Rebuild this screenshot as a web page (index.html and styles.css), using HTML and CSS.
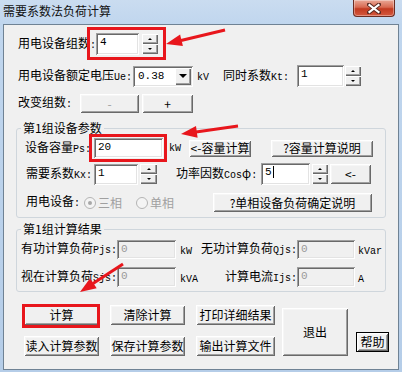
FILE: index.html
```html
<!DOCTYPE html>
<html lang="zh">
<head>
<meta charset="utf-8">
<title>需要系数法负荷计算</title>
<link rel="stylesheet" href="styles.css">
</head>
<body>
<div class="window">
  <div class="titlebar">
    <span class="title">需要系数法负荷计算</span>
    <div class="close">
      <svg width="14" height="11" viewBox="0 0 14 11">
        <path d="M2 1.5 L12 9.5 M12 1.5 L2 9.5" stroke="#5a2a22" stroke-width="4" stroke-linecap="square"/>
        <path d="M2.5 2 L11.5 9 M11.5 2 L2.5 9" stroke="#fff" stroke-width="2.2" stroke-linecap="square"/>
      </svg>
    </div>
  </div>

  <div class="client">
    <div class="row row-1">
      <div class="lbl w-count">用电设备组数<span class="m">:</span></div>
      <div class="edit e-count">4</div>
      <div class="spin sp-count"><span class="up"></span><span class="dn"></span></div>
    </div>

    <div class="row row-2">
      <div class="lbl w-volt">用电设备额定电压<span class="m">Ue:</span></div>
      <div class="combo">
        <div class="combo-val">0.38</div>
        <div class="combo-dd"><span class="tri"></span></div>
      </div>
      <div class="unit u-kv m">kV</div>
      <div class="lbl w-kt">同时系数<span class="m">Kt:</span></div>
      <div class="edit e-kt">1</div>
      <div class="spin sp-kt"><span class="up"></span><span class="dn"></span></div>
    </div>

    <div class="row row-3">
      <div class="lbl w-chg">改变组数<span class="m">:</span></div>
      <div class="btn b-minus dim">-</div>
      <div class="btn b-plus">+</div>
    </div>

    <fieldset class="group g-1">
      <legend>第1组设备参数</legend>
      <div class="row row-a">
        <div class="lbl w-ps">设备容量<span class="m">Ps:</span></div>
        <div class="edit e-ps">20</div>
        <div class="unit u-kw m">kW</div>
        <div class="btn b-cap">&lt;-容量计算</div>
        <div class="btn b-capdoc">?容量计算说明</div>
      </div>
      <div class="row row-b">
        <div class="lbl w-kx">需要系数<span class="m">Kx:</span></div>
        <div class="edit e-kx">1</div>
        <div class="spin sp-kx"><span class="up"></span><span class="dn"></span></div>
        <div class="lbl w-cos">功率因数<span class="m">Cos</span>φ<span class="m">:</span></div>
        <div class="edit e-cos">5<span class="caret"></span></div>
        <div class="spin sp-cos"><span class="up"></span><span class="dn"></span></div>
        <div class="btn b-back">&lt;-</div>
      </div>
      <div class="row row-c">
        <div class="lbl w-dev">用电设备<span class="m">:</span></div>
        <span class="radio on"></span><span class="rlbl">三相</span>
        <span class="radio r2"></span><span class="rlbl">单相</span>
        <div class="btn b-single">?单相设备负荷确定说明</div>
      </div>
    </fieldset>

    <fieldset class="group g-2">
      <legend>第1组计算结果</legend>
      <div class="row row-r1">
        <div class="lbl w-res">有功计算负荷<span class="m">Pjs:</span></div>
        <div class="edit dis e-res">0</div>
        <div class="unit u-res m">kW</div>
        <div class="lbl w-res2">无功计算负荷<span class="m">Qjs:</span></div>
        <div class="edit dis e-res2">0</div>
        <div class="unit u-res3 m">kVar</div>
      </div>
      <div class="row row-r2">
        <div class="lbl w-res">视在计算负荷<span class="m">Sjs:</span></div>
        <div class="edit dis e-res">0</div>
        <div class="unit u-res m">kVA</div>
        <div class="lbl w-res2">计算电流<span class="m">Ijs:</span></div>
        <div class="edit dis e-res2">0</div>
        <div class="unit u-res3 m">A</div>
      </div>
    </fieldset>

    <div class="actions">
      <div class="btn-grid">
        <div class="btn">计算</div>
        <div class="btn">清除计算</div>
        <div class="btn">打印详细结果</div>
        <div class="btn">读入计算参数</div>
        <div class="btn">保存计算参数</div>
        <div class="btn">输出计算文件</div>
      </div>
      <div class="btn b-exit">退出</div>
      <div class="btn def b-help">帮助</div>
    </div>
  </div>

  <svg class="marks" width="402" height="372" viewBox="0 0 402 372">
    <g fill="none" stroke="#e8161c" stroke-width="3">
      <rect x="88.5" y="28.5" width="76" height="30"/>
      <rect x="90.5" y="135.5" width="75" height="25"/>
      <rect x="23.5" y="305.5" width="75" height="21"/>
      <line x1="225" y1="30" x2="181" y2="40.5"/>
      <line x1="238" y1="126" x2="196" y2="132"/>
      <line x1="123" y1="264" x2="93" y2="283.5"/>
    </g>
    <g fill="#e8161c">
      <polygon points="166,44 180.1,34.5 182.9,46.1"/>
      <polygon points="181,134 196,125.9 197.6,137.7"/>
      <polygon points="80,292 90.1,278.3 96.7,288.3"/>
    </g>
  </svg>
</div>
</body>
</html>
```

FILE: styles.css
```css
* { box-sizing: border-box; }
html, body { margin: 0; padding: 0; }
body {
  width: 402px; height: 372px; overflow: hidden;
  background: #bcd3eb;
  font-family: "Noto Sans CJK SC", sans-serif;
  font-size: 12px; color: #000;
}
.window {
  position: relative; width: 402px; height: 372px;
  background: linear-gradient(to bottom, #cadcf0 0, #c0d6ee 24px, #b5cde8 100%);
}
.titlebar {
  height: 24px; display: flex; justify-content: space-between; align-items: flex-start;
}
.title { margin: 3px 0 0 3px; line-height: 15px; font-size: 12px; color: #111; }
.close {
  width: 42px; height: 17px; margin-right: 7px;
  border: 1px solid #6b2c22; border-top: none; border-radius: 0 0 4px 4px;
  background: linear-gradient(#eaa896, #d86a52 45%, #c23a20 55%, #d4583e);
  display: flex; align-items: center; justify-content: center;
  box-shadow: inset 0 0 0 1px rgba(255,255,255,0.35);
}
.client {
  margin-left: 3px; width: 396px; height: 346px;
  border: 1px solid #6f8294; background: #f0f0f0;
  display: flex; flex-direction: column;
}
.m { font-family: "Liberation Mono", monospace; font-size: 10px; }
.row { display: flex; align-items: center; flex: none; }
.lbl { flex: none; white-space: nowrap; line-height: 14px; }
.unit { flex: none; white-space: nowrap; }

/* edits */
.edit {
  flex: none; background: #fff;
  box-shadow: inset 1px 1px 0 #a0a0a0, inset -1px -1px 0 #fff, inset 2px 2px 0 #696969, inset -2px -2px 0 #e3e3e3;
  padding: 3px 0 0 4px;
  font-family: "Liberation Mono", monospace; font-size: 11px; line-height: 12px;
  display: flex; align-items: flex-start;
}
.edit.dis { background: #f0f0f0; color: #9a9a9a; }
.caret { display: inline-block; width: 1px; height: 12px; background: #000; margin-left: 1px; }

/* spinner */
.spin { flex: none; display: flex; flex-direction: column; }
.spin span {
  flex: 1; background: #f0f0f0;
  box-shadow: inset 1px 1px 0 #fff, inset -1px -1px 0 #696969, inset -2px -2px 0 #a0a0a0;
  display: flex; align-items: center; justify-content: center;
}
.spin .up::after {
  content: ""; border-left: 2px solid transparent; border-right: 2px solid transparent;
  border-bottom: 2px solid #000;
}
.spin .dn::after {
  content: ""; border-left: 2px solid transparent; border-right: 2px solid transparent;
  border-top: 2px solid #000;
}

/* buttons */
.btn {
  flex: none; display: flex; align-items: center; justify-content: center;
  background: #f0f0f0; white-space: nowrap; line-height: 14px;
  box-shadow: inset 1px 1px 0 #fff, inset -1px -1px 0 #696969, inset 2px 2px 0 #f6f6f6, inset -2px -2px 0 #a0a0a0;
}
.btn.dim { color: #a0a0a0; }
.btn.def { border: 1px solid #000; }

/* combo */
.combo {
  flex: none; width: 60px; height: 21px; display: flex; background: #fff;
  box-shadow: inset 1px 1px 0 #a0a0a0, inset -1px -1px 0 #fff, inset 2px 2px 0 #696969, inset -2px -2px 0 #e3e3e3;
  padding: 2px;
}
.combo-val { flex: 1; padding: 1px 0 0 3px; font-family: "Liberation Mono", monospace; font-size: 11px; line-height: 14px; }
.combo-dd {
  width: 16px; background: #f0f0f0; display: flex; align-items: center; justify-content: center;
  box-shadow: inset 1px 1px 0 #fff, inset -1px -1px 0 #696969, inset -2px -2px 0 #a0a0a0;
}
.tri { width: 0; height: 0; border-left: 4px solid transparent; border-right: 4px solid transparent; border-top: 4px solid #000; }

/* radios */
.radio {
  flex: none; width: 12px; height: 12px; border-radius: 50%;
  border: 1px solid #b4b4b4; background: #f4f4f4;
  display: flex; align-items: center; justify-content: center;
}
.radio.on::after { content: ""; width: 4px; height: 4px; border-radius: 50%; background: #a8a8a8; }
.rlbl { flex: none; color: #a0a0a0; margin-left: 2px; }
.radio.r2 { margin-left: 14px; }

/* row 1 */
.row-1 { margin: 8px 0 0 14px; height: 22px; }
.w-count { width: 78px; }
.e-count { width: 43px; height: 22px; }
.sp-count { margin-left: 3px; width: 16px; height: 20px; }

/* row 2 */
.row-2 { margin: 10px 0 0 14px; height: 22px; }
.w-volt { width: 115px; }
.u-kv { margin-left: 4px; width: 26px; padding-top: 3px; }
.w-kt { width: 74px; }
.e-kt { width: 47px; height: 22px; }
.sp-kt { margin-left: 1px; width: 16px; height: 20px; }

/* row 3 */
.row-3 { margin: 7px 0 0 14px; height: 19px; }
.w-chg { width: 62px; }
.b-minus { width: 59px; height: 19px; }
.b-plus { margin-left: 3px; width: 51px; height: 19px; }

/* groups */
.group {
  flex: none; margin: 8px 0 0 12px; width: 370px; min-width: 0;
  padding: 0 0 5px 0; border: 1px solid #cfd6dc; border-radius: 3px;
}
.group legend { margin-left: 4px; padding: 0 2px; line-height: 14px; font-size: 12px; }
.g-2 { margin-top: 4px; padding-bottom: 4px; }

.row-a { margin: 3px 0 0 8px; height: 20px; }
.w-ps { width: 69px; }
.e-ps { width: 69px; height: 20px; }
.u-kw { margin-left: 6px; width: 20px; }
.b-cap { width: 62px; height: 17px; }
.b-capdoc { margin-left: 20px; width: 102px; height: 17px; }

.row-b { margin: 5px 0 0 9px; height: 22px; }
.w-kx { width: 68px; }
.e-kx { width: 44px; height: 21px; }
.sp-kx { margin-left: 2px; width: 17px; height: 20px; }
.w-cos { margin-left: 19px; width: 85px; }
.e-cos { width: 49px; height: 22px; }
.sp-cos { margin-left: 2px; width: 16px; height: 20px; }
.b-back { margin-left: 2px; width: 41px; height: 20px; }

.row-c { margin: 8px 0 0 9px; height: 19px; }
.w-dev { width: 58px; }
.b-single { margin-left: 39px; width: 159px; height: 19px; }

.row-r1 { margin: 4px 0 0 4px; height: 19px; }
.row-r2 { margin: 8px 0 0 4px; height: 20px; }
.w-res { width: 96px; }
.e-res { width: 59px; height: 100%; }
.u-res { margin-left: 4px; width: 21px; padding-top: 4px; }
.w-res2 { width: 96px; text-align: right; }
.e-res2 { width: 58px; height: 100%; }
.u-res3 { margin-left: 3px; padding-top: 4px; }

/* bottom actions */
.actions { display: flex; align-items: flex-start; margin: 13px 0 0 20px; }
.btn-grid {
  display: grid; grid-template-columns: 75px 75px 79px; grid-template-rows: 20px 20px;
  column-gap: 11px; row-gap: 11px;
}
.b-exit { margin: 3px 0 0 7px; width: 66px; height: 48px; }
.b-help { margin: 27px 0 0 8px; width: 33px; height: 20px; }

/* annotations */
.marks { position: absolute; left: 0; top: 0; pointer-events: none; }
```
